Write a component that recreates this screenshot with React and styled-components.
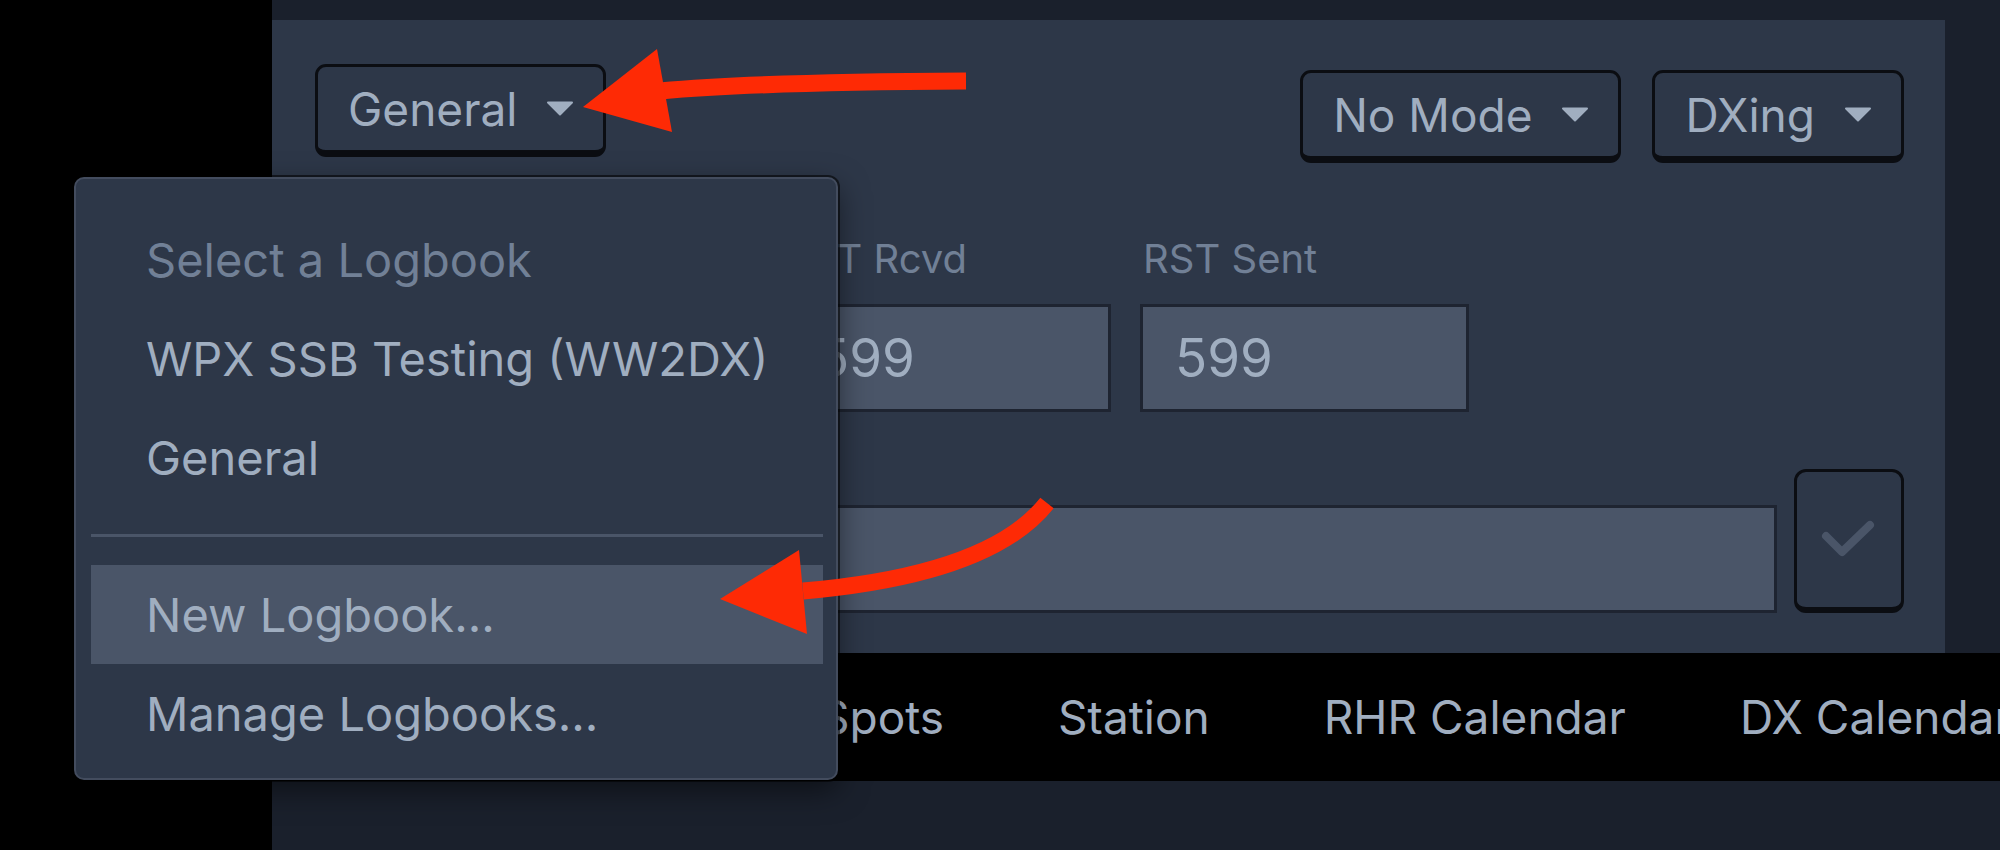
import React from 'react';
import styled, { createGlobalStyle } from 'styled-components';

const GlobalStyle = createGlobalStyle`
  html, body {
    margin: 0;
    padding: 0;
    background: #000;
  }
  body {
    font-family: Inter, "Noto Sans", sans-serif;
    -webkit-font-smoothing: antialiased;
  }
`;

const logbooks = ['WPX SSB Testing (WW2DX)', 'General'];
const tabs = ['Logbook', 'Map', 'Spots', 'Station', 'RHR Calendar', 'DX Calendar', 'Contests'];

const Caret = () => (
    <CaretIcon viewBox="0 0 28 15">
        <polygon points="2,1.5 26,1.5 14,13.5" />
    </CaretIcon>
);

const App = () => {
    return (
        <Page>
            <GlobalStyle />
            <Sidebar />
            <Main>
                <PanelWrap>
                    <Panel>
                        <TopRow>
                            <Dropdown>
                                <SelectButton>
                                    General
                                    <Caret />
                                </SelectButton>
                                <Menu>
                                    <MenuItem $muted>Select a Logbook</MenuItem>
                                    {logbooks.map((name) => (
                                        <MenuItem key={name}>{name}</MenuItem>
                                    ))}
                                    <MenuDivider />
                                    <MenuItem $active>New Logbook...</MenuItem>
                                    <MenuItem>Manage Logbooks...</MenuItem>
                                </Menu>
                            </Dropdown>
                            <ModeGroup>
                                <SelectButton>
                                    No Mode
                                    <Caret />
                                </SelectButton>
                                <SelectButton>
                                    DXing
                                    <Caret />
                                </SelectButton>
                            </ModeGroup>
                        </TopRow>

                        <FieldsRow>
                            <Field $width={438}>
                                <Label>Callsign</Label>
                                <Input defaultValue="" />
                            </Field>
                            <Field $width={329}>
                                <Label>RST Rcvd</Label>
                                <Input defaultValue="599" />
                            </Field>
                            <Field $width={329}>
                                <Label>RST Sent</Label>
                                <Input defaultValue="599" />
                            </Field>
                        </FieldsRow>

                        <NotesRow>
                            <NotesInput defaultValue="" />
                            <CheckButton>
                                <svg width="56" height="40" viewBox="0 0 56 40">
                                    <polyline
                                        points="5,16 21,32 49,5"
                                        fill="none"
                                        stroke="#4a5568"
                                        strokeWidth="8"
                                        strokeLinecap="round"
                                        strokeLinejoin="round"
                                    />
                                </svg>
                            </CheckButton>
                        </NotesRow>
                    </Panel>
                </PanelWrap>

                <TabBar>
                    {tabs.map((tab) => (
                        <Tab key={tab}>{tab}</Tab>
                    ))}
                </TabBar>
            </Main>

            <Annotations viewBox="0 0 2000 850">
                <path d="M 660 91 Q 760 82 966 81" />
                <polygon points="583,107 657,49 672,132" />
                <path d="M 803 591 Q 990 575 1047 503" />
                <polygon points="720,599 799,550 807,634" />
            </Annotations>
        </Page>
    );
};

export default App;

const Page = styled.div`
    position: relative;
    display: flex;
    width: 2000px;
    height: 850px;
    overflow: hidden;
    background: #000;
`;

const Sidebar = styled.aside`
    width: 272px;
    flex-shrink: 0;
    background: #000;
`;

const Main = styled.main`
    flex: 1;
    min-width: 0;
    display: flex;
    flex-direction: column;
    background: #1a202c;
`;

const PanelWrap = styled.div`
    padding: 20px 55px 0 0;
`;

const Panel = styled.section`
    background: #2d3748;
    padding: 44px 41px 40px 43px;
    display: flex;
    flex-direction: column;
`;

const TopRow = styled.div`
    display: flex;
    justify-content: space-between;
    align-items: flex-start;
    height: 100px;
`;

const Dropdown = styled.div`
    position: relative;
`;

const ModeGroup = styled.div`
    display: flex;
    gap: 31px;
    margin-top: 6px;
`;

const SelectButton = styled.button`
    box-sizing: border-box;
    height: 93px;
    display: inline-flex;
    align-items: center;
    gap: 29px;
    padding: 0 29px 0 30px;
    background: #2d3748;
    color: #a0aec0;
    border: 3px solid #0b0d12;
    border-bottom-width: 7px;
    border-radius: 11px;
    font-family: inherit;
    font-size: 46px;
    line-height: 1;
    cursor: pointer;
`;

const CaretIcon = styled.svg`
    width: 28px;
    height: 15px;
    fill: #a0aec0;
    stroke: #a0aec0;
    stroke-width: 2;
    stroke-linejoin: round;
`;

const Menu = styled.div`
    position: absolute;
    top: calc(100% + 20px);
    left: -241px;
    z-index: 5;
    box-sizing: border-box;
    width: 764px;
    padding: 31px 13px 15px 15px;
    background: #2d3748;
    border: 2px solid #434c5e;
    border-radius: 10px;
    box-shadow: 0 0 0 2px rgba(0, 0, 0, 0.55), 0 10px 30px rgba(0, 0, 0, 0.5);
`;

const MenuItem = styled.div`
    height: 99px;
    display: flex;
    align-items: center;
    padding-left: 55px;
    font-size: 47px;
    white-space: nowrap;
    color: ${(p) => (p.$muted ? '#718096' : '#a0aec0')};
    background: ${(p) => (p.$active ? '#4a5568' : 'transparent')};
`;

const MenuDivider = styled.div`
    height: 3px;
    margin: 27px 0 28px;
    background: #4a5568;
`;

const FieldsRow = styled.div`
    display: flex;
    gap: 29px;
    margin-top: 72px;
`;

const Field = styled.label`
    display: flex;
    flex-direction: column;
    width: ${(p) => p.$width}px;
`;

const Label = styled.span`
    font-size: 40px;
    line-height: 46px;
    color: #718096;
    margin-bottom: 22px;
    padding-left: 3px;
`;

const Input = styled.input`
    box-sizing: border-box;
    width: 100%;
    height: 108px;
    padding: 0 32px;
    background: #4a5568;
    color: #a0aec0;
    border: 3px solid #1e2431;
    font-family: inherit;
    font-size: 53px;
    outline: none;
`;

const NotesRow = styled.div`
    display: flex;
    align-items: flex-end;
    gap: 17px;
    margin-top: 57px;
`;

const NotesInput = styled(Input)`
    flex: 1;
    width: auto;
    min-width: 0;
`;

const CheckButton = styled.button`
    box-sizing: border-box;
    flex-shrink: 0;
    width: 110px;
    height: 144px;
    display: flex;
    align-items: center;
    justify-content: center;
    padding: 0;
    background: #2d3748;
    border: 3px solid #0b0d12;
    border-bottom-width: 6px;
    border-radius: 12px;
    cursor: pointer;
`;

const TabBar = styled.nav`
    height: 128px;
    display: flex;
    align-items: center;
    gap: 114px;
    padding-left: 34px;
    background: #000;
    white-space: nowrap;
    overflow: hidden;
`;

const Tab = styled.span`
    font-size: 46px;
    color: #a0aec0;
`;

const Annotations = styled.svg`
    position: absolute;
    inset: 0;
    width: 2000px;
    height: 850px;
    pointer-events: none;
    z-index: 10;

    path {
        fill: none;
        stroke: #fe2a05;
        stroke-width: 17;
    }

    polygon {
        fill: #fe2a05;
    }
`;
